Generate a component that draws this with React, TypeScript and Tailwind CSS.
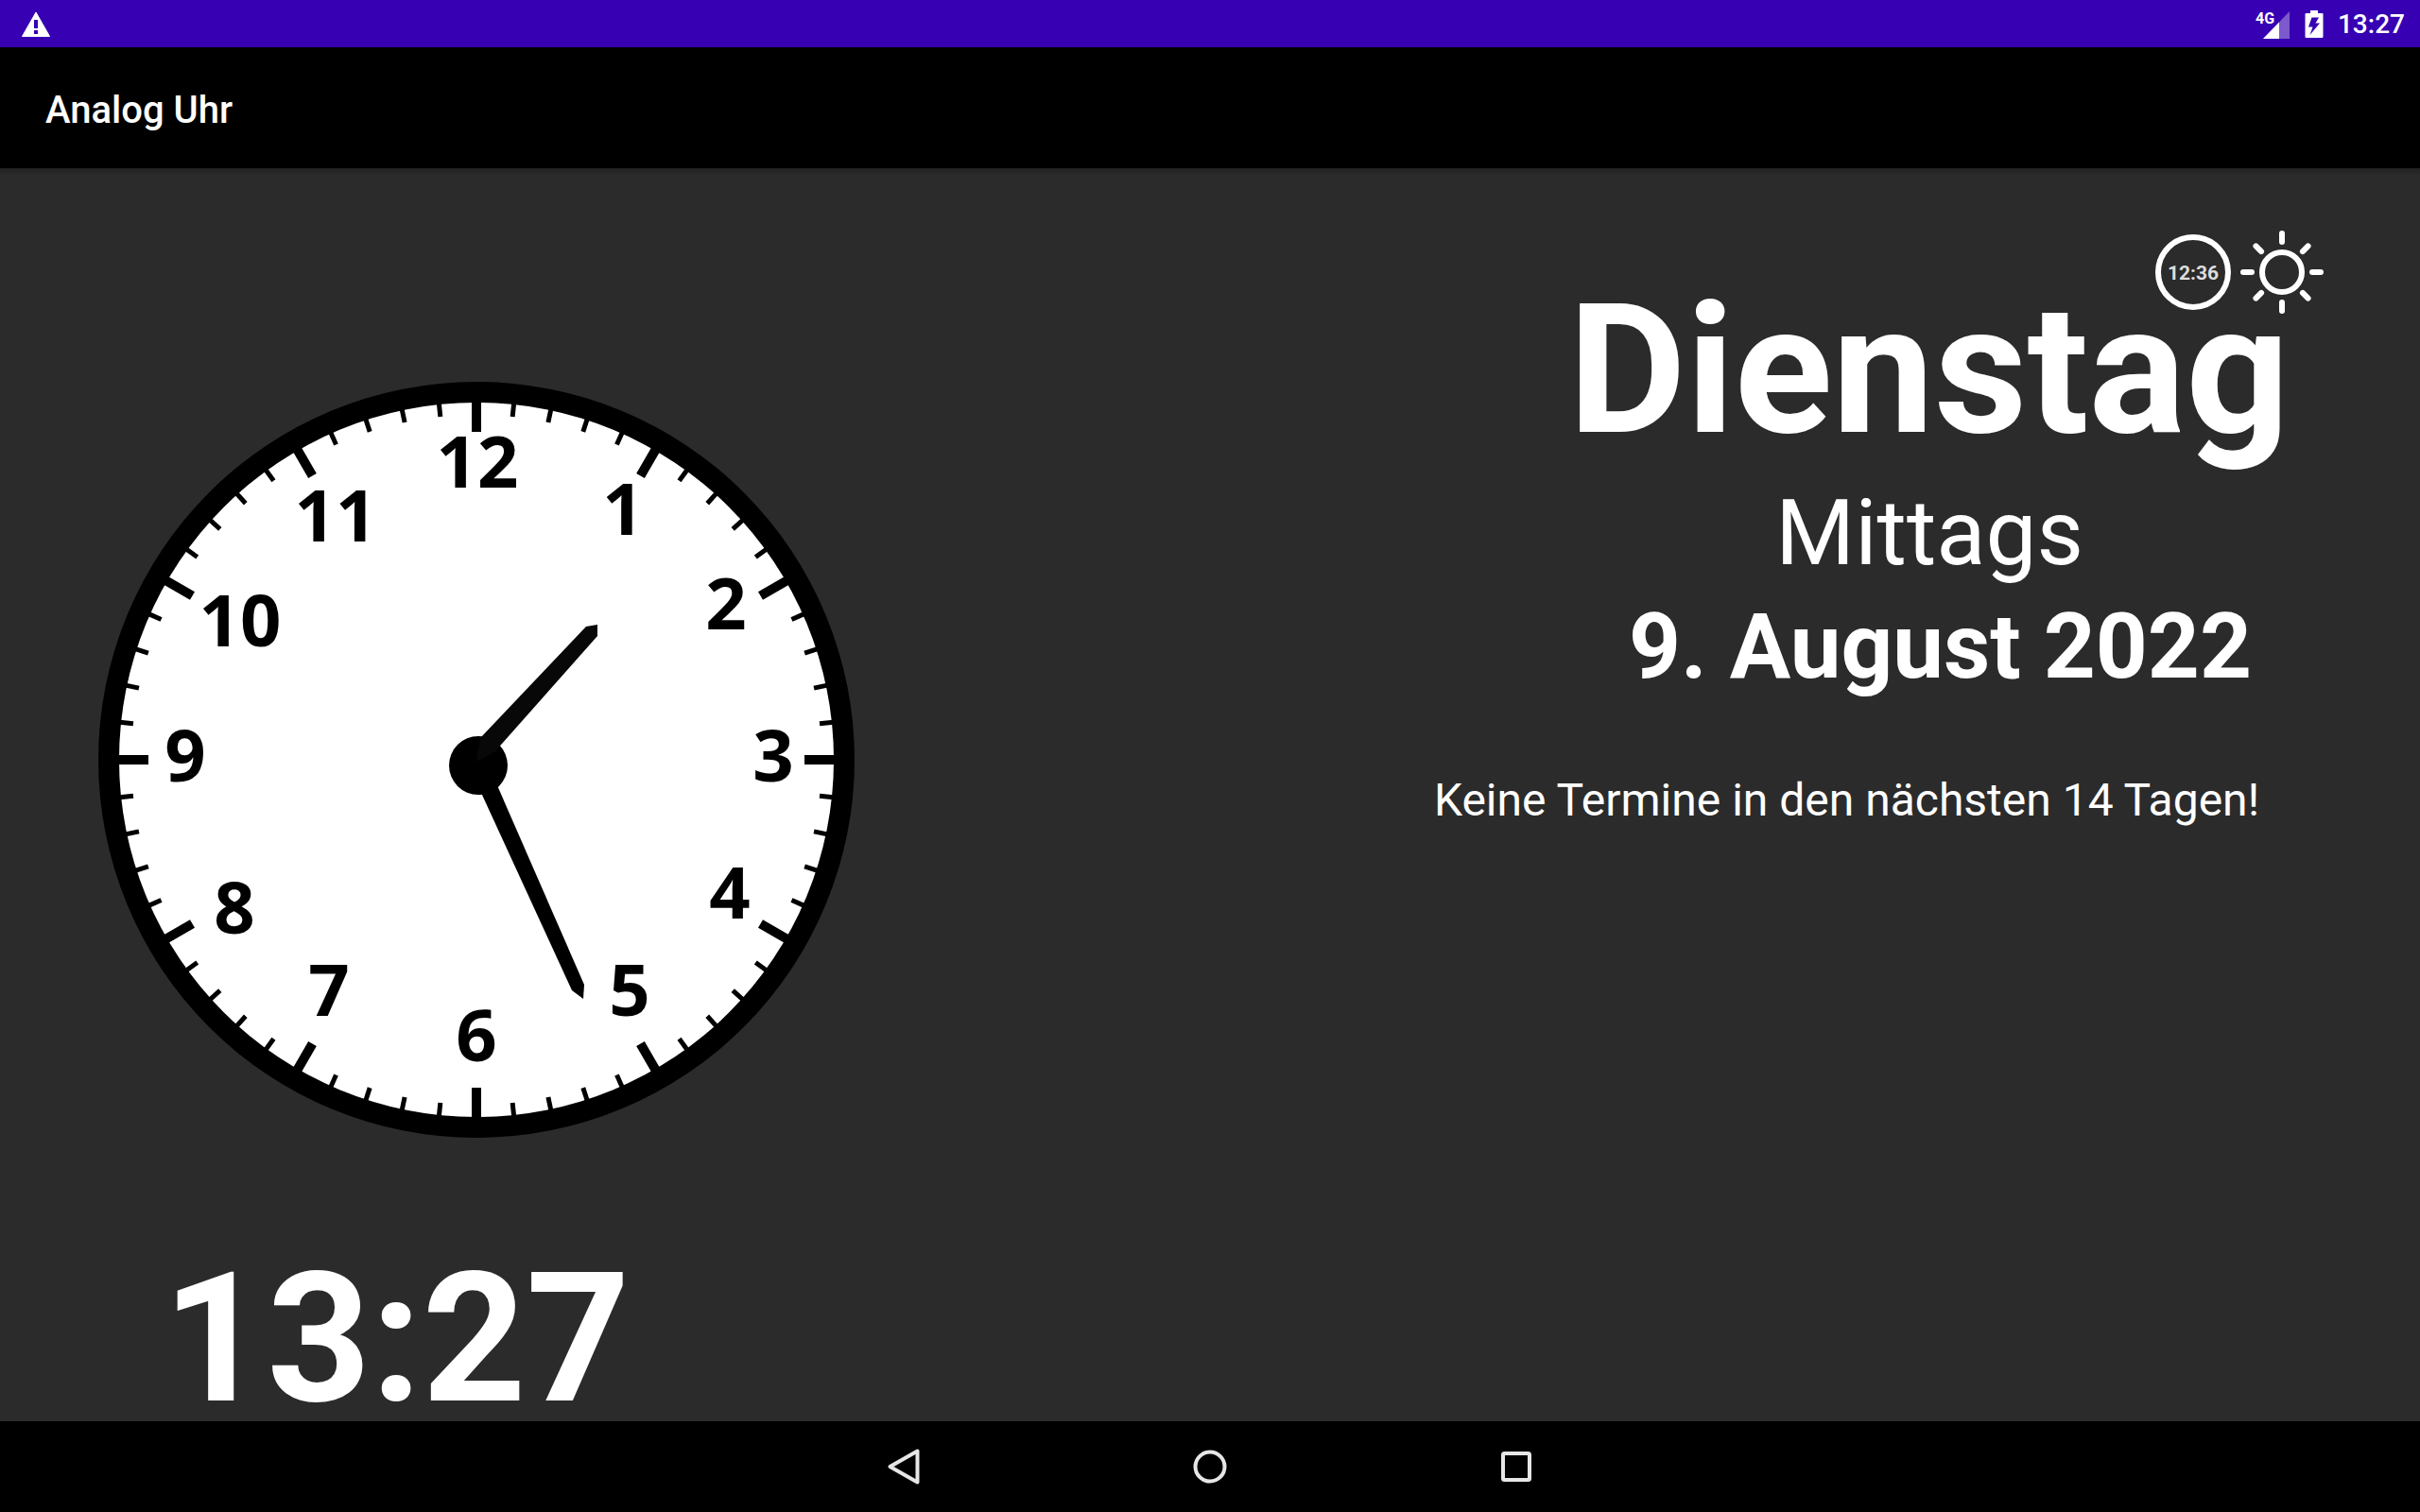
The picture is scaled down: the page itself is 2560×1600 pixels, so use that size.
const NUMERALS = [
  { label: '12', x: 401, y: 112 },
  { label: '1', x: 555, y: 162 },
  { label: '2', x: 664, y: 262 },
  { label: '3', x: 714, y: 423 },
  { label: '4', x: 668, y: 568 },
  { label: '5', x: 562, y: 671 },
  { label: '6', x: 400, y: 719 },
  { label: '7', x: 244, y: 671 },
  { label: '8', x: 144, y: 584 },
  { label: '9', x: 92, y: 423 },
  { label: '10', x: 150, y: 280 },
  { label: '11', x: 251, y: 169 },
];

const TICKS = Array.from({ length: 60 }, (_, i) => i);

function WarningIcon() {
  return (
    <svg className="h-7 w-[30px]" viewBox="0 0 30 28" aria-label="Warnung">
      <path
        fill="#fff"
        d="M15 1 29.5 26.5H.5Z"
        stroke="#fff"
        strokeWidth="1"
        strokeLinejoin="round"
      />
      <path fill="#3700b3" d="M13 9h4v9h-4zM13 20h4v4h-4z" />
    </svg>
  );
}

function SignalIcon() {
  return (
    <svg className="h-8 w-[38px] overflow-visible" viewBox="0 0 38 32" aria-label="4G">
      <path fill="#fff" fillOpacity=".35" d="M37 2V31H9Z" />
      <path fill="#fff" d="M26 13.500V31H9Z" />
      <text x="1" y="15" className="font-['Roboto'] text-[16px] font-bold" fill="#fff">
        4G
      </text>
    </svg>
  );
}

function BatteryIcon() {
  return (
    <svg className="h-[30px] w-5" viewBox="0 0 20 30" aria-label="Akku lädt">
      <path fill="#fff" d="M6 0h8v3h4.500a1 1 0 0 1 1 1v24a1 1 0 0 1-1 1h-17a1 1 0 0 1-1-1V4a1 1 0 0 1 1-1H6Z" />
      <path fill="#3700b3" d="M7.500 7.500H15l-3.500 6H16L5.500 26l3-8.500h-4.500Z" />
    </svg>
  );
}

function StatusBar() {
  return (
    <div className="flex h-[50px] items-center justify-between bg-[#3700b3] pt-px pr-4 pl-[23px]">
      <WarningIcon />
      <div className="flex items-center gap-[15px]">
        <SignalIcon />
        <BatteryIcon />
        <span className="text-[28px] leading-8 font-medium">13:27</span>
      </div>
    </div>
  );
}

function AnalogClock() {
  return (
    <svg className="size-[800px]" viewBox="0 0 800 800" role="img" aria-label="Analoge Uhr">
      <circle cx="400" cy="400" r="400" fill="#000" />
      <circle cx="400" cy="400" r="378" fill="#fff" />
      {TICKS.map((i) => {
        const major = i % 5 === 0;
        return (
          <line
            key={i}
            x1="400"
            y1="18"
            x2="400"
            y2={major ? 53 : 35}
            stroke="#000"
            strokeWidth={major ? 10 : 5}
            transform={`rotate(${i * 6} 400 400)`}
          />
        );
      })}
      {NUMERALS.map((n) => (
        <text
          key={n.label}
          x={n.x}
          y={n.y}
          textAnchor="middle"
          className="font-['Open_Sans'] text-[76px] font-bold"
          fill="#000"
        >
          {n.label}
        </text>
      ))}
      <circle cx="402" cy="406" r="31" fill="#000" />
      <path fill="#080808" d="M404 377 516 259 528 257V269L419 392 400 402Z" />
      <path fill="#000" d="M400 424 501 644 513 653 514 638 418 418Z" />
    </svg>
  );
}

function DigitalBadge() {
  return (
    <svg className="size-[88px]" viewBox="0 0 88 88" role="img" aria-label="Digitale Uhr">
      <circle cx="44" cy="44" r="37" fill="none" stroke="#fff" strokeWidth="6" />
      <text x="44" y="52" textAnchor="middle" className="font-['Roboto'] text-[21px] font-bold" fill="#ddd">
        12:36
      </text>
    </svg>
  );
}

function SunIcon() {
  return (
    <svg className="size-[88px]" viewBox="0 0 88 88" role="img" aria-label="Tag">
      <g fill="none" stroke="#fff" strokeWidth="6" strokeLinecap="round">
        <circle cx="44" cy="44" r="21" />
        {[0, 45, 90, 135, 180, 225, 270, 315].map((a) => (
          <path key={a} d={a % 90 ? 'M44 5v8' : 'M44 3v9'} transform={`rotate(${a} 44 44)`} />
        ))}
      </g>
    </svg>
  );
}

function NavBar() {
  return (
    <nav className="flex h-24 justify-center bg-black text-[#e6e6e6]">
      <button type="button" aria-label="Zurück" className="grid w-[324px] place-items-center">
        <svg className="size-10" viewBox="0 0 40 40" fill="none" stroke="currentColor" strokeWidth="4" strokeLinejoin="round">
          <path d="M34.500 3.500V36.500L5.500 20Z" />
        </svg>
      </button>
      <button type="button" aria-label="Startseite" className="grid w-[324px] place-items-center">
        <svg className="size-10" viewBox="0 0 40 40" fill="none" stroke="currentColor" strokeWidth="4">
          <circle cx="20" cy="20" r="15.500" />
        </svg>
      </button>
      <button type="button" aria-label="Übersicht" className="grid w-[324px] place-items-center">
        <svg className="size-10" viewBox="0 0 40 40" fill="none" stroke="currentColor" strokeWidth="4">
          <rect x="6" y="6" width="28" height="28" rx="1.500" />
        </svg>
      </button>
    </nav>
  );
}

export default function App() {
  return (
    <div className="flex min-h-screen flex-col bg-[#2b2b2b] font-['Roboto',sans-serif] text-white">
      <StatusBar />
      <header className="flex h-32 items-center bg-black px-12 pt-1.5">
        <h1 className="text-[40px] leading-12 font-medium">Analog Uhr</h1>
      </header>
      <div className="h-2 bg-linear-to-b from-[#222] to-[#2b2b2b]" />
      <main className="flex flex-1 justify-between">
        <section className="flex flex-col pt-[218px] pb-[7px] pl-[104px]">
          <AnalogClock />
          <time className="mt-[133px] pl-[68px] text-[192px] leading-40 font-bold">13:27</time>
        </section>
        <section className="flex flex-col items-end pt-[58px] pr-[102px]">
          <div className="flex gap-[6px]">
            <DigitalBadge />
            <SunIcon />
          </div>
          <h2 className="-mt-9 pr-9 text-[192px] leading-48 font-bold">Dienstag</h2>
          <p className="mt-4 pr-[254px] text-[96px] leading-30">Mittags</p>
          <p className="pr-[76px] text-[96px] leading-30 font-bold">9. August 2022</p>
          <p className="mt-[71px] pr-[68px] text-[48px] leading-16">Keine Termine in den nächsten 14 Tagen!</p>
        </section>
      </main>
      <NavBar />
    </div>
  );
}
